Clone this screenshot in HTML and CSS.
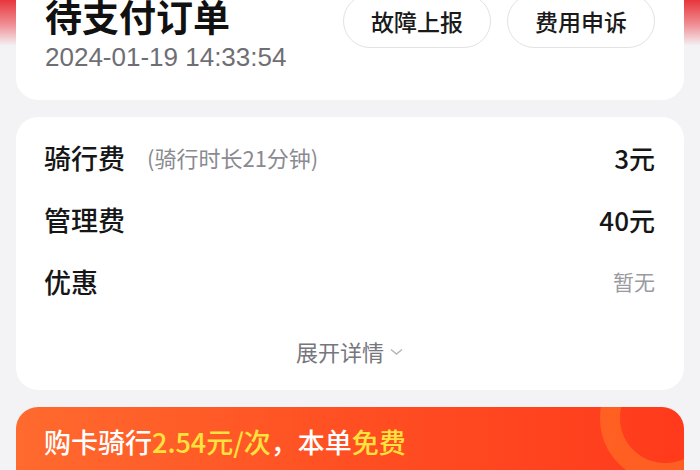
FILE: index.html
```html
<!DOCTYPE html>
<html>
	<head>
		<meta charset="utf-8"/>
		<title>订单详情</title>
		<link rel="stylesheet" href="styles.css">
	</head>
	<body>
		<div class="page">
			<div class="card status-card">
				<div class="status-info">
					<div class="status-title">待支付订单</div>
					<div class="status-time">2024-01-19 14:33:54</div>
				</div>
				<div class="status-actions">
					<button class="pill">故障上报</button>
					<button class="pill">费用申诉</button>
				</div>
			</div>

			<div class="card fee-card">
				<div class="fee-row">
					<div class="fee-label">骑行费<span class="fee-note">(骑行时长21分钟)</span></div>
					<div class="fee-value">3元</div>
				</div>
				<div class="fee-row">
					<div class="fee-label">管理费</div>
					<div class="fee-value">40元</div>
				</div>
				<div class="fee-row">
					<div class="fee-label">优惠</div>
					<div class="fee-value muted">暂无</div>
				</div>
				<div class="expand">
					展开详情
					<svg class="chevron" width="13" height="8" viewBox="0 0 13 8">
						<path d="M1 1.5 L6.5 6 L12 1.5" fill="none" stroke="#b4b4b8" stroke-width="1.4"/>
					</svg>
				</div>
			</div>

			<div class="card promo-card">
				<div class="promo-ring"></div>
				<div class="promo-text">购卡骑行<span class="hl">2.54元/次</span>，本单<span class="hl">免费</span></div>
			</div>
		</div>
	</body>
</html>
```

FILE: styles.css
```css
body {
	margin: 0;
	background: linear-gradient(#e8353d 0, #ef8c91 24px, #f3f3f5 46px, #f3f3f5 100%);
	font-family: "Noto Sans CJK SC", "Noto Sans", sans-serif;
	overflow: hidden;
}
.page {
	display: flex;
	flex-direction: column;
	padding: 0 16px;
}
.card {
	background-color: #ffffff;
	border-radius: 22px;
}
.status-card {
	margin-top: -20px;
	padding: 14px 29px 28px 29px;
	display: flex;
	justify-content: space-between;
	align-items: flex-start;
}
.status-title {
	font-size: 37px;
	line-height: 44px;
	font-weight: bold;
	color: #111111;
}
.status-time {
	margin-top: 4px;
	font-family: "Liberation Sans", Arial, sans-serif;
	font-size: 26px;
	line-height: 30px;
	color: #6e6e74;
}
.status-actions {
	display: flex;
	gap: 16px;
}
.pill {
	width: 148px;
	height: 54px;
	border: 1px solid #e2e2e4;
	border-radius: 27px;
	background: #ffffff;
	font-family: inherit;
	font-size: 23px;
	font-weight: 500;
	color: #1a1a1a;
	padding: 0;
}
.fee-card {
	margin-top: 17px;
	padding: 9px 29px 24px 28px;
}
.fee-row {
	display: flex;
	justify-content: space-between;
	align-items: center;
	height: 62px;
}
.fee-label {
	font-size: 27px;
	font-weight: 500;
	color: #161616;
	display: flex;
	align-items: center;
}
.fee-note {
	font-size: 22px;
	font-weight: normal;
	color: #8a8a90;
	margin-left: 22px;
}
.fee-value {
	font-size: 26px;
	font-weight: 500;
	color: #161616;
}
.fee-value.muted {
	font-size: 21px;
	font-weight: normal;
	color: #9a9aa0;
}
.expand {
	margin-top: 24px;
	height: 30px;
	display: flex;
	justify-content: center;
	align-items: center;
	gap: 6px;
	font-size: 22px;
	color: #76767c;
}
.chevron {
	margin-top: 2px;
}
.promo-card {
	margin-top: 17px;
	height: 100px;
	padding: 19px 28px 0 28px;
	background: linear-gradient(90deg, #ff6a2e 0%, #ff4f22 50%, #ff3a1c 100%);
	position: relative;
	overflow: hidden;
}
.promo-ring {
	position: absolute;
	left: 584px;
	top: -54px;
	width: 90px;
	height: 90px;
	border-radius: 50%;
	border: 20px solid rgba(255, 130, 40, 0.5);
}
.promo-text {
	position: relative;
	font-size: 27px;
	line-height: 32px;
	font-weight: 500;
	color: #ffffff;
}
.hl {
	color: #ffe23d;
}
```
